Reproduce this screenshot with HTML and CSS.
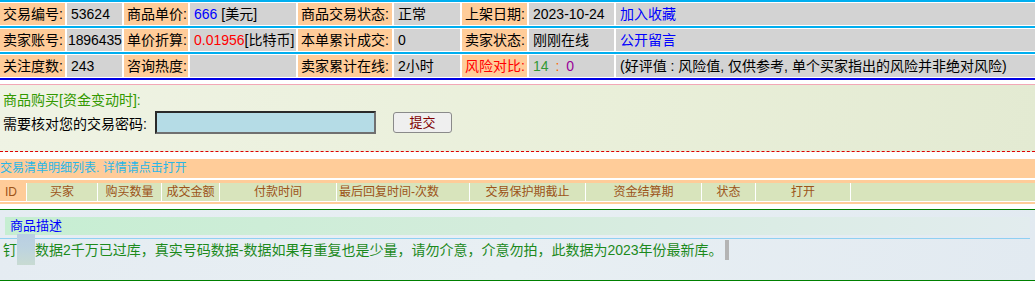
FILE: index.html
```html
<!DOCTYPE html>
<html lang="zh-CN">
<head>
    <meta charset="UTF-8">
    <title>商品详情</title>
    <link rel="stylesheet" href="styles.css">
</head>
<body>
    <div class="info">
        <div class="info-row">
            <div class="lbl">交易编号:</div>
            <div class="val">53624</div>
            <div class="lbl">商品单价:</div>
            <div class="val"><span class="blue">666</span> [美元]</div>
            <div class="lbl">商品交易状态:</div>
            <div class="val">正常</div>
            <div class="lbl">上架日期:</div>
            <div class="val">2023-10-24</div>
            <div class="val"><a class="link">加入收藏</a></div>
        </div>
        <div class="info-row">
            <div class="lbl">卖家账号:</div>
            <div class="val tight">1896435</div>
            <div class="lbl">单价折算:</div>
            <div class="val"><span class="red">0.01956</span>[比特币]</div>
            <div class="lbl">本单累计成交:</div>
            <div class="val">0</div>
            <div class="lbl">卖家状态:</div>
            <div class="val">刚刚在线</div>
            <div class="val"><a class="link">公开留言</a></div>
        </div>
        <div class="info-row">
            <div class="lbl">关注度数:</div>
            <div class="val">243</div>
            <div class="lbl">咨询热度:</div>
            <div class="val"></div>
            <div class="lbl">卖家累计在线:</div>
            <div class="val">2小时</div>
            <div class="lbl red">风险对比:</div>
            <div class="val"><span class="good">14</span> <span class="sep">:</span> <span class="bad">0</span></div>
            <div class="val">(好评值 : 风险值, 仅供参考, 单个买家指出的风险并非绝对风险)</div>
        </div>
    </div>

    <div class="buy">
        <div class="buy-title">商品购买[资金变动时]:</div>
        <div class="buy-row">
            <span>需要核对您的交易密码:</span>
            <input class="pwd" type="password">
            <button class="submit">提交</button>
        </div>
    </div>

    <div class="list">
        <div class="list-title">交易清单明细列表. 详情请点击打开</div>
        <div class="list-head">
            <div class="head-row">
                <div class="hc id">ID</div>
                <div class="hc">买家</div>
                <div class="hc">购买数量</div>
                <div class="hc">成交金额</div>
                <div class="hc">付款时间</div>
                <div class="hc left">最后回复时间-次数</div>
                <div class="hc">交易保护期截止</div>
                <div class="hc">资金结算期</div>
                <div class="hc">状态</div>
                <div class="hc">打开</div>
                <div class="hc"></div>
            </div>
        </div>
    </div>

    <div class="desc">
        <div class="desc-title">商品描述</div>
        <div class="desc-body">钉<span class="mosaic"></span>数据2千万已过库，真实号码数据-数据如果有重复也是少量，请勿介意，介意勿拍，此数据为2023年份最新库。<span class="caret"></span></div>
    </div>
</body>
</html>
```

FILE: styles.css
```css
body {
    margin: 0;
    font-family: "Liberation Sans", "Noto Sans CJK SC", sans-serif;
    font-size: 14px;
    color: #000;
    background: #fff;
}

/* top info block */
.info {
    border-bottom: 2px solid #0000e6;
    margin-bottom: 4px;
}

.info-row {
    display: grid;
    grid-template-columns: 65px 55px 64px 106px 94px 66px 65px 85px 1fr;
    column-gap: 2px;
    border-top: 2px solid #00aeef;
    padding: 1px 0;
}

.lbl,
.val {
    height: 22px;
    line-height: 22px;
    padding-left: 3px;
    white-space: nowrap;
    overflow: hidden;
}

.lbl {
    background-color: #ffcc99;
}

.val {
    background-color: #d3d3d3;
    padding-left: 4px;
}

.val.tight {
    padding-left: 1px;
    letter-spacing: -0.1px;
}

.blue { color: #0000ff; }
.red { color: #ff0000; }
.link { color: #0000ff; cursor: pointer; }
.good { color: #339933; }
.sep { color: #ff6600; padding: 0 3px; }
.bad { color: #990099; }

/* buy form */
.buy {
    border-top: 1px solid #f2a7b6;
    border-bottom: 1px dashed #dd0000;
    background: linear-gradient(100deg, #eff3e4 0%, #e9efd9 60%, #e3ead2 100%);
    padding: 6px 3px 19px;
    height: 41px;
}

.buy-title {
    color: #339900;
    line-height: 18px;
}

.buy-row {
    display: flex;
    align-items: center;
    margin-top: 2px;
}

.pwd {
    width: 221px;
    height: 23px;
    box-sizing: border-box;
    margin: 0 0 0 8px;
    background-color: #b5dce6;
    border: 2px solid;
    border-color: #2a2a2a #707070 #707070 #2a2a2a;
    padding: 0;
}

.submit {
    width: 59px;
    height: 21px;
    margin-left: 17px;
    padding: 0;
    background-color: #efefef;
    border: 1px solid #8a8a8a;
    border-radius: 3px;
    color: #800000;
    font-family: inherit;
    font-size: 13px;
    line-height: 19px;
}

/* deal list */
.list {
    margin-top: 7px;
}

.list-title {
    background-color: #ffcc99;
    color: #29b6e8;
    font-size: 12px;
    height: 19px;
    line-height: 19px;
}

.list-head {
    border-top: 2px solid #fff;
    background-color: #ffcc99;
    padding: 3px 0 2px;
}

.head-row {
    display: grid;
    grid-template-columns: 26px 70px 63px 57px 116px 132px 115px 115px 53px 94px 1fr;
    column-gap: 1px;
    background-color: #fff;
    border-bottom: 1px solid #fff;
}

.hc {
    background-color: #d8e4bc;
    color: #9c5318;
    font-size: 12px;
    height: 18px;
    line-height: 18px;
    text-align: center;
    white-space: nowrap;
}

.hc.id {
    background-color: #ffcc99;
    text-align: left;
    padding-left: 5px;
}

.hc.left {
    text-align: left;
    padding-left: 2px;
}

/* description */
.desc {
    margin-top: 5px;
    border-top: 1px solid #008000;
    border-bottom: 1px solid #008000;
    background: linear-gradient(100deg, #e5ecf2 0%, #e8eff3 50%, #e2eaf1 100%);
    padding-top: 7px;
    height: 63px;
}

.desc-title {
    margin: 0 5px;
    height: 18px;
    line-height: 18px;
    padding-left: 5px;
    font-size: 13px;
    color: #0000ff;
    background: linear-gradient(90deg, #c6eed2 0%, #d4ecdc 50%, #e2ecee 100%);
}

.desc-body {
    margin: 3px 5px 0 0;
    border-top: 1px solid #8fd0f2;
    padding: 1px 3px 0;
    color: #1c8a1c;
    line-height: 20px;
    white-space: nowrap;
}

.mosaic {
    display: inline-block;
    width: 18px;
    height: 31px;
    margin: -6px 0 -8px;
    vertical-align: top;
    background: linear-gradient(180deg, #b9cfe3 0%, #bdd3e0 45%, #c8dbd2 100%);
}

.caret {
    display: inline-block;
    width: 4px;
    height: 20px;
    margin-left: 2px;
    vertical-align: top;
    background-color: #b4b4b4;
}
```
